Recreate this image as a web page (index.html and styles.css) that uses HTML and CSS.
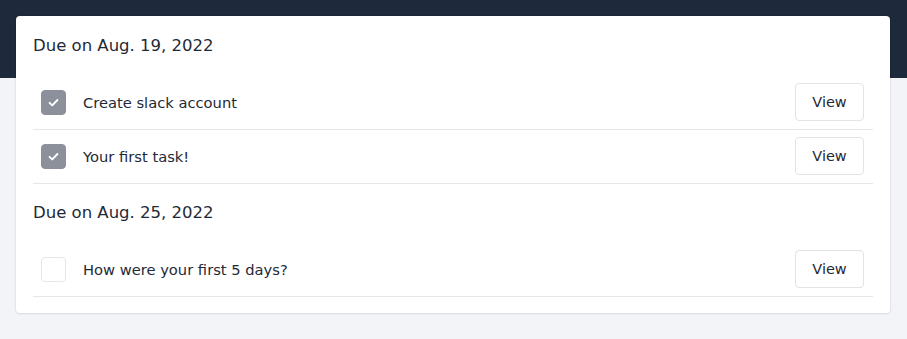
FILE: index.html
```html
<!DOCTYPE html>
<html>
<head>
<meta charset="utf-8">
<link rel="stylesheet" href="styles.css">
</head>
<body>
<div class="hero"></div>
<main class="page">
  <div class="card">
    <section class="group">
      <h2 class="due">Due on Aug. 19, 2022</h2>
      <div class="row">
        <span class="check done"><svg viewBox="0 0 24 24" width="25" height="25"><path d="M8.2 12.3l2.6 2.5 5-5.2" fill="none" stroke="#fff" stroke-width="1.8" stroke-linecap="round" stroke-linejoin="round"/></svg></span>
        <span class="title">Create slack account</span>
        <button class="btn">View</button>
      </div>
      <div class="row">
        <span class="check done"><svg viewBox="0 0 24 24" width="25" height="25"><path d="M8.2 12.3l2.6 2.5 5-5.2" fill="none" stroke="#fff" stroke-width="1.8" stroke-linecap="round" stroke-linejoin="round"/></svg></span>
        <span class="title">Your first task!</span>
        <button class="btn">View</button>
      </div>
    </section>
    <section class="group">
      <h2 class="due">Due on Aug. 25, 2022</h2>
      <div class="row">
        <span class="check"></span>
        <span class="title">How were your first 5 days?</span>
        <button class="btn">View</button>
      </div>
    </section>
  </div>
</main>
</body>
</html>
```
FILE: styles.css
```css
html, body { margin: 0; padding: 0; }
body {
  background: #f3f4f7;
  font-family: "DejaVu Sans", sans-serif;
  color: #1f2937;
  height: 339px;
  overflow: hidden;
}
.hero {
  height: 78px;
  background: #1e293b;
}
.page {
  margin-top: -62px;
  padding: 0 17px 0 16px;
}
.card {
  background: #fff;
  border-radius: 4px;
  box-shadow: 0 1px 3px rgba(0,0,0,0.08), 0 0 0 1px rgba(0,0,0,0.03);
  padding: 18px 17px 16px 17px;
}
.group + .group { margin-top: 17px; }
.due {
  margin: 0 0 18px 0;
  font-size: 16.5px;
  font-weight: normal;
  line-height: 24px;
  color: #1f2937;
}
.row {
  display: flex;
  align-items: center;
  padding: 7px 9px 8px 8px;
  border-bottom: 1px solid #e5e7eb;
}
.check {
  width: 25px;
  height: 25px;
  border-radius: 4px;
  border: 1px solid #e5e7eb;
  box-sizing: border-box;
  background: #fff;
  display: flex;
  align-items: center;
  justify-content: center;
  flex: none;
  overflow: hidden;
}
.check.done {
  background: #8b909b;
  border-color: #8b909b;
}
.check svg { display: block; flex: none; }
.title {
  margin-left: 17px;
  font-size: 14.7px;
  flex: 1;
  color: #1f2937;
}
.btn {
  font-family: "DejaVu Sans", sans-serif;
  font-size: 14.5px;
  color: #1f2937;
  background: #fff;
  border: 1px solid #e1e3e8;
  border-radius: 4px;
  width: 69px;
  height: 38px;
  padding: 0;
  cursor: pointer;
}
```
